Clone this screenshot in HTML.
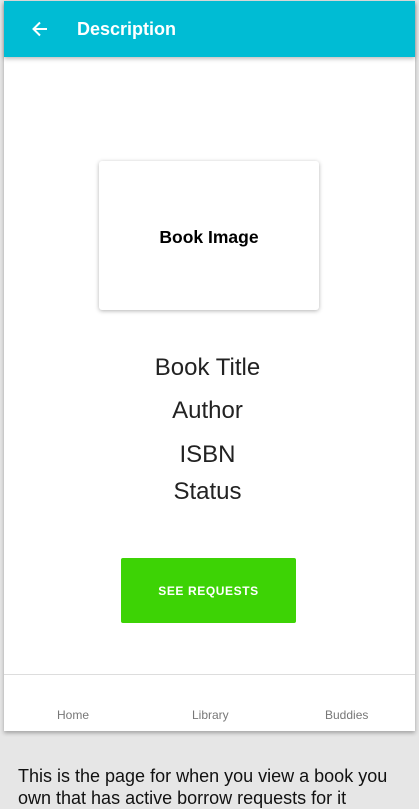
<!DOCTYPE html>
<html><head><style>
*{margin:0;padding:0;box-sizing:border-box}
body{width:419px;height:806px;background:#e6e6e6;font-family:"Liberation Sans",sans-serif;position:relative;overflow:hidden}
.frame{position:absolute;left:4px;top:1px;width:411px;height:730px;background:#fff;box-shadow:0 2px 4px rgba(0,0,0,.3)}
.hdr{position:absolute;left:0;top:0;width:411px;height:56px;background:#00bcd4;box-shadow:0 2px 4px rgba(0,0,0,.25)}
.hdr .t{position:absolute;left:73px;top:18px;color:#fff;font-size:18px;font-weight:bold}
.card{position:absolute;left:95px;top:160px;width:220px;height:149px;background:#fff;border-radius:3px;box-shadow:0 1px 4px rgba(0,0,0,.3);text-align:center;line-height:152px;font-size:17.5px;font-weight:bold;color:#000}
.txt{position:absolute;left:-2px;width:411px;text-align:center;font-size:24px;color:#222}
.btn{position:absolute;left:117px;top:557px;width:175px;height:65px;background:#3dd305;color:#fff;font-size:12px;font-weight:bold;letter-spacing:.6px;text-align:center;line-height:67px;border-radius:2px}
.nav{position:absolute;left:0;top:673px;width:411px;height:57px;border-top:1px solid #ddd}
.nav span{position:absolute;top:33px;font-size:12px;color:#777}
.cap{position:absolute;left:18px;top:765px;font-size:18px;line-height:22px;color:#111}
</style></head><body>
<div class="frame">
<div class="hdr">
<svg style="position:absolute;left:27px;top:19px" width="18" height="18" viewBox="0 0 18 18"><path d="M16 9H3M9 2.5L2.5 9L9 15.5" stroke="#fff" stroke-width="2" fill="none"/></svg>
<div class="t">Description</div></div>
<div class="card">Book Image</div>
<div class="txt" style="top:353px">Book Title</div>
<div class="txt" style="top:396px">Author</div>
<div class="txt" style="top:440px">ISBN</div>
<div class="txt" style="top:477px">Status</div>
<div class="btn">SEE REQUESTS</div>
<div class="nav"><span style="left:53px">Home</span><span style="left:188px">Library</span><span style="left:321px">Buddies</span></div>
</div>
<div class="cap">This is the page for when you view a book you<br>own that has active borrow requests for it</div>
</body></html>
